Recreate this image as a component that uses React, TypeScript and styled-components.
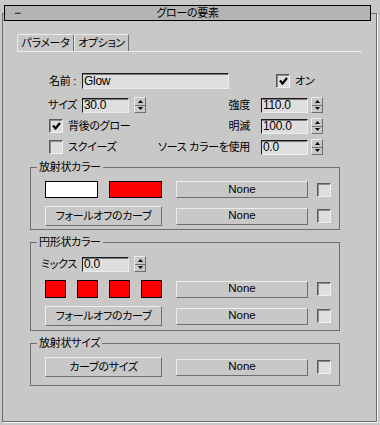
import React from "react";
import styled, { createGlobalStyle } from "styled-components";

const Global = createGlobalStyle`
  html, body { margin: 0; padding: 0; background: #c8c8c8; }
  body {
    font-family: "Liberation Sans", "Noto Sans CJK JP", sans-serif;
    font-size: 11px;
    letter-spacing: -0.3px;
    color: #000;
    font-feature-settings: "palt" 1;
  }
  * { box-sizing: border-box; }
`;

const Page = styled.div`
  width: 380px;
  height: 425px;
  padding: 13px 0 0 2px;
  background: #c8c8c8;
`;

const Rollout = styled.div`
  width: 375px;
  height: 409px;
  border: 1px solid #6e6e6e;
  box-shadow: 1px 1px 0 #f2f2f2;
  display: flex;
  flex-direction: column;
`;

const TitleBar = styled.div`
  margin: -9px 0 0 1px;
  width: 367px;
  height: 16px;
  flex: none;
  border: 1px solid #000;
  background: #b4b4b4;
  display: grid;
  grid-template-columns: 24px 1fr 24px;
  align-items: center;
  line-height: 14px;
`;

const Collapse = styled.span`
  padding-left: 9px;
  font-size: 12px;
`;

const TitleText = styled.span`
  text-align: center;
`;

const TabStrip = styled.div`
  margin: 13px 0 0 14px;
  width: 345px;
  height: 18px;
  flex: none;
  display: flex;
  align-items: flex-end;
  border-bottom: 1px solid #ececec;
`;

const Tab = styled.div<{ $w: number }>`
  width: ${(p) => p.$w}px;
  height: 17px;
  border-left: 1px solid #ececec;
  border-top: 1px solid #ececec;
  border-right: 1px solid #6e6e6e;
  border-radius: 2px 2px 0 0;
  display: flex;
  align-items: center;
  justify-content: center;
  line-height: 1;
`;

const Params = styled.div`
  margin-top: 21px;
  display: flex;
  flex-direction: column;
  gap: 8px;
`;

const Row = styled.div`
  display: flex;
  align-items: center;
  height: 16px;
`;

const ParamGrid = styled.div`
  display: grid;
  grid-template-columns: 143px 1fr;
  grid-auto-rows: 16px;
  row-gap: 5px;
`;

const Label = styled.span<{ $w: number; $gap: number }>`
  width: ${(p) => p.$w}px;
  margin-right: ${(p) => p.$gap}px;
  flex: none;
  display: flex;
  justify-content: flex-end;
  white-space: nowrap;
  line-height: 1;
`;

const TextField = styled.div<{ $w: number; $h: number }>`
  width: ${(p) => p.$w}px;
  height: ${(p) => p.$h}px;
  flex: none;
  background: #dedede;
  border: 1px solid;
  border-color: #1a1a1a #ececec #ececec #1a1a1a;
  box-shadow: inset 0 1px 0 #7a7a7a;
  padding: 0 0 0 1px;
  display: flex;
  align-items: center;
  line-height: 1;
  font-family: "Liberation Sans", sans-serif;
  font-size: 12px;
  letter-spacing: -0.3px;
`;

const Spinner = styled.div<{ $gap: number }>`
  margin-left: ${(p) => p.$gap}px;
  width: 12px;
  height: 16px;
  flex: none;
  border: 1px solid;
  border-color: #ececec #6e6e6e #6e6e6e #ececec;
  display: flex;
  flex-direction: column;
`;

const SpinHalf = styled.div<{ $divider?: boolean }>`
  flex: 1;
  display: flex;
  align-items: center;
  justify-content: center;
  border-top: ${(p) => (p.$divider ? "1px solid #6e6e6e" : "none")};
`;

const CheckItem = styled.label<{ $ml: number }>`
  margin-left: ${(p) => p.$ml}px;
  display: flex;
  align-items: center;
  gap: 5px;
  line-height: 1;
  white-space: nowrap;
`;

const Box = styled.span<{ $ml?: number }>`
  margin-left: ${(p) => p.$ml ?? 0}px;
  width: 14px;
  height: 14px;
  flex: none;
  background: #dedede;
  border: 1px solid;
  border-color: #5a5a5a #f0f0f0 #f0f0f0 #5a5a5a;
  box-shadow: inset 1px 1px 0 #8c8c8c;
  display: flex;
  align-items: center;
  justify-content: center;
`;

const Cell = styled.div`
  display: flex;
  align-items: center;
`;

const Groups = styled.div`
  margin: 5px 0 0 27px;
  display: flex;
  flex-direction: column;
  gap: 5px;
`;

const Group = styled.fieldset<{ $pb: number }>`
  margin: 0;
  width: 310px;
  min-width: 0;
  border: 1px solid #6e6e6e;
  padding: 7px 0 ${(p) => p.$pb}px 14px;
  display: flex;
  flex-direction: column;
  gap: 8px;
`;

const Legend = styled.legend`
  margin-left: -8px;
  padding: 0 2px;
  height: 14px;
  line-height: 14px;
`;

const GroupRow = styled.div<{ $h: number }>`
  height: ${(p) => p.$h}px;
  display: flex;
  align-items: center;
`;

const SwatchSet = styled.div<{ $spread?: boolean }>`
  width: 117px;
  height: 100%;
  flex: none;
  display: flex;
  align-items: stretch;
  gap: 11px;
  justify-content: ${(p) => (p.$spread ? "space-between" : "flex-start")};
`;

const Swatch = styled.div<{ $w: number; $color: string }>`
  width: ${(p) => p.$w}px;
  border: 1px solid #000;
  background: ${(p) => p.$color};
`;

const Button = styled.button<{ $w: number; $h: number; $ml?: number; $latin?: boolean }>`
  margin: 0 0 0 ${(p) => p.$ml ?? 0}px;
  width: ${(p) => p.$w}px;
  height: ${(p) => p.$h}px;
  flex: none;
  padding: 0;
  background: #c8c8c8;
  color: #000;
  border: 1px solid;
  border-color: #ececec #6e6e6e #6e6e6e #ececec;
  font-family: ${(p) =>
    p.$latin ? '"Liberation Sans", sans-serif' : '"Liberation Sans", "Noto Sans CJK JP", sans-serif'};
  font-size: ${(p) => (p.$latin ? 11.5 : 11)}px;
  letter-spacing: ${(p) => (p.$latin ? 0 : -0.3)}px;
  font-feature-settings: "palt" 1;
  line-height: 1;
`;

const Up = () => (
  <svg width="5" height="3" viewBox="0 0 5 3">
    <path d="M2.5 0 L5 3 L0 3 Z" fill="#000" />
  </svg>
);
const Down = () => (
  <svg width="5" height="3" viewBox="0 0 5 3">
    <path d="M0 0 L5 0 L2.5 3 Z" fill="#000" />
  </svg>
);

const Spin = ({ gap }: { gap: number }) => (
  <Spinner $gap={gap}>
    <SpinHalf>
      <Up />
    </SpinHalf>
    <SpinHalf $divider>
      <Down />
    </SpinHalf>
  </Spinner>
);

const Check = ({ on, ml }: { on?: boolean; ml?: number }) => (
  <Box $ml={ml}>
    {on && (
      <svg width="9" height="8" viewBox="0 0 9 8">
        <path d="M1 3.5 L3.5 6.5 L8 1" stroke="#000" strokeWidth="2.2" fill="none" />
      </svg>
    )}
  </Box>
);

const NoneRow = () => (
  <>
    <Button $w={132} $h={17} $ml={14} $latin>
      None
    </Button>
    <Check ml={9} />
  </>
);

export default function App() {
  return (
    <>
      <Global />
      <Page>
        <Rollout>
          <TitleBar>
            <Collapse>−</Collapse>
            <TitleText>グローの要素</TitleText>
            <span />
          </TitleBar>
          <TabStrip>
            <Tab $w={57}>パラメータ</Tab>
            <Tab $w={55}>オプション</Tab>
          </TabStrip>
          <Params>
            <Row>
              <Label $w={73} $gap={6}>名前 :</Label>
              <TextField $w={147} $h={16}>Glow</TextField>
              <CheckItem $ml={47}>
                <Check on />
                オン
              </CheckItem>
            </Row>
            <ParamGrid>
              <Cell>
                <Label $w={74} $gap={5}>サイズ</Label>
                <TextField $w={47} $h={15}>30.0</TextField>
                <Spin gap={5} />
              </Cell>
              <Cell>
                <Label $w={104} $gap={11}>強度</Label>
                <TextField $w={47} $h={15}>110.0</TextField>
                <Spin gap={3} />
              </Cell>
              <Cell>
                <CheckItem $ml={46}>
                  <Check on />
                  背後のグロー
                </CheckItem>
              </Cell>
              <Cell>
                <Label $w={104} $gap={11}>明滅</Label>
                <TextField $w={47} $h={15}>100.0</TextField>
                <Spin gap={3} />
              </Cell>
              <Cell>
                <CheckItem $ml={46}>
                  <Check />
                  スクイーズ
                </CheckItem>
              </Cell>
              <Cell>
                <Label $w={104} $gap={11}>ソース カラーを使用</Label>
                <TextField $w={47} $h={15}>0.0</TextField>
                <Spin gap={3} />
              </Cell>
            </ParamGrid>
          </Params>
          <Groups>
            <Group $pb={3}>
              <Legend>放射状カラー</Legend>
              <GroupRow $h={17}>
                <SwatchSet>
                  <Swatch $w={53} $color="#ffffff" />
                  <Swatch $w={53} $color="#ff0000" />
                </SwatchSet>
                <NoneRow />
              </GroupRow>
              <GroupRow $h={20}>
                <Button $w={117} $h={20}>フォールオフのカーブ</Button>
                <NoneRow />
              </GroupRow>
            </Group>
            <Group $pb={4}>
              <Legend>円形状カラー</Legend>
              <GroupRow $h={16}>
                <Label $w={32} $gap={5}>ミックス</Label>
                <TextField $w={47} $h={15}>0.0</TextField>
                <Spin gap={5} />
              </GroupRow>
              <GroupRow $h={18}>
                <SwatchSet $spread>
                  <Swatch $w={23} $color="#ff0000" />
                  <Swatch $w={23} $color="#ff0000" />
                  <Swatch $w={23} $color="#ff0000" />
                  <Swatch $w={23} $color="#ff0000" />
                </SwatchSet>
                <NoneRow />
              </GroupRow>
              <GroupRow $h={20}>
                <Button $w={117} $h={20}>フォールオフのカーブ</Button>
                <NoneRow />
              </GroupRow>
            </Group>
            <Group $pb={8}>
              <Legend>放射状サイズ</Legend>
              <GroupRow $h={20}>
                <Button $w={117} $h={20}>カーブのサイズ</Button>
                <NoneRow />
              </GroupRow>
            </Group>
          </Groups>
        </Rollout>
      </Page>
    </>
  );
}
